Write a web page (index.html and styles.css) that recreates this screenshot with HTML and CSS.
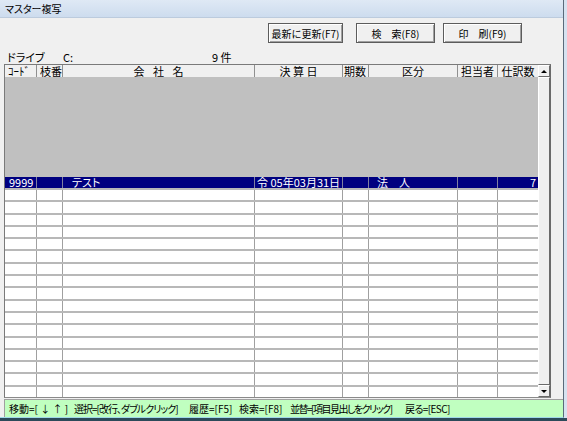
FILE: index.html
```html
<!DOCTYPE html>
<html lang="ja">
<head>
  <meta charset="UTF-8" />
  <title>マスター複写</title>
  <link rel="stylesheet" href="styles.css">
</head>
<body>
  <div id="frame">
    <div id="window">
      <div class="titlebar">マスター複写</div>
      <div class="toolbar">
        <button class="btn btn-refresh">最新に更新(F7)</button>
        <button class="btn">検　索(F8)</button>
        <button class="btn">印　刷(F9)</button>
      </div>
      <div class="drive">
        <span class="drive-label">ドライブ</span>
        <span class="drive-name">C:</span>
        <span class="drive-count">9 件</span>
      </div>
      <div class="grid">
        <div class="table">
          <div class="row head">
            <div class="cell c1">ｺｰﾄﾞ</div>
            <div class="cell c2">枝番</div>
            <div class="cell c3 center wide">会 社 名</div>
            <div class="cell c4 center">決 算 日</div>
            <div class="cell c5">期数</div>
            <div class="cell c6 center">区分</div>
            <div class="cell c7 center">担当者</div>
            <div class="cell c8 center">仕訳数</div>
          </div>
          <div class="blank"></div>
          <div id="rows" class="rows">
            <div class="row sel">
              <div class="cell c1 code">9999</div>
              <div class="cell c2"></div>
              <div class="cell c3 name">テスト</div>
              <div class="cell c4 date">令 05年03月31日</div>
              <div class="cell c5"></div>
              <div class="cell c6 kind">法　人</div>
              <div class="cell c7"></div>
              <div class="cell c8 num">7</div>
            </div>
          </div>
        </div>
        <div class="vscroll">
          <div class="arrow up"><span></span></div>
          <div class="thumb"></div>
          <div class="arrow down"><span></span></div>
        </div>
      </div>
      <div class="status">
        <span class="hint h-move">移動=[ ↓ ↑ ]</span>
        <span class="hint h-select">選択=[改行、ダブルクリック]</span>
        <span class="hint h-hist">履歴=[F5]</span>
        <span class="hint h-find">検索=[F8]</span>
        <span class="hint h-sort">並替=[項目見出しをクリック]</span>
        <span class="hint h-back">戻る=[ESC]</span>
      </div>
    </div>
  </div>
  <script>
    const rows = document.getElementById('rows');
    for (let i = 0; i < 17; i++) {
      const row = document.createElement('div');
      row.className = 'row';
      for (let c = 1; c <= 8; c++) {
        const cell = document.createElement('div');
        cell.className = 'cell c' + c;
        row.appendChild(cell);
      }
      rows.appendChild(row);
    }
  </script>
</body>
</html>
```

FILE: styles.css
```css
body {
  margin: 0;
  height: 421px;
  background: #2c4a5a;
  font-family: "Noto Sans CJK JP", "Noto Sans", sans-serif;
  font-feature-settings: "palt";
  color: #000;
  overflow: hidden;
}
#frame {
  width: 567px;
  height: 418px;
  background: #d6e2f0;
}
#window {
  width: 564px;
  height: 418px;
  box-sizing: border-box;
  background: #f0f0f0;
  border-right: 1px solid #5a6a7a;
  border-bottom: 1px solid #9fd8e8;
  display: flex;
  flex-direction: column;
}
.titlebar {
  height: 18px;
  line-height: 17px;
  padding-left: 5px;
  font-size: 10px;
  background: linear-gradient(#dfe9f5, #cddcee);
  border-bottom: 1px solid #bccbdd;
  box-sizing: border-box;
}
.toolbar {
  display: flex;
  gap: 8px;
  margin-top: 5px;
  padding-left: 268px;
  height: 20px;
}
.btn {
  width: 79px;
  height: 20px;
  padding: 0;
  font-family: inherit;
  font-size: 10px;
  background: #f0f0f0;
  border: 1px solid #5c5c5c;
  box-shadow: inset 1px 1px 0 #fff, inset -1px -1px 0 #a0a0a0;
  color: #000;
}
.btn-refresh {
  width: 75px;
  margin-right: 5px;
}
.drive {
  height: 21px;
  box-sizing: border-box;
  padding-top: 8px;
  line-height: 12px;
  font-size: 11px;
  display: flex;
}
.drive-label { margin-left: 7px; width: 56px; }
.drive-name { width: 149px; }
.grid {
  display: flex;
  margin-left: 4px;
  width: 547px;
  border-left: 1px solid #7a7a7a;
  border-right: 1px solid #6a6a6a;
  border-top: 1px solid #7a7a7a;
  border-bottom: 1px solid #8a8a8a;
  box-sizing: border-box;
}
.table {
  width: 533px;
  display: flex;
  flex-direction: column;
}
.row {
  display: grid;
  grid-template-columns: 32px 26px 192px 88px 26px 89px 40px 40px;
  font-size: 11px;
  line-height: 12px;
}
.cell {
  border-right: 1px solid #a0a0a0;
  box-sizing: border-box;
  white-space: nowrap;
}
.c8 { border-right: none; }
.head {
  height: 12px;
  background: #f0f0f0;
}
.head .cell {
  border-right-color: #909090;
  padding-left: 3px;
}
.head .c5 { padding-left: 1px; }
.head .center { padding-left: 0; text-align: center; }
.head .wide { word-spacing: 6px; }
.blank {
  height: 100px;
  background: #c0c0c0;
}
.rows {
  height: 220px;
  display: flex;
  flex-direction: column;
  background: #fff;
}
.rows .row {
  flex: 1;
  border-bottom: 2px solid #b8b8b8;
  box-sizing: border-box;
}
.rows .row:last-child { border-bottom: none; }
.rows .cell { line-height: 11px; }
.sel {
  background: #000080;
  color: #fff;
}
.sel .cell { border-right-color: #8080a0; }
.code { padding-left: 4px; }
.name { padding-left: 9px; }
.date { padding-left: 2px; }
.kind { padding-left: 8px; }
.num { text-align: right; padding-right: 2px; }
.vscroll {
  width: 12px;
  display: flex;
  flex-direction: column;
}
.arrow, .thumb {
  background: #f0f0f0;
  border: 1px solid;
  border-color: #fff #6a6a6a #6a6a6a #fff;
  box-sizing: border-box;
}
.arrow {
  height: 12px;
  display: flex;
  justify-content: center;
  align-items: center;
}
.thumb { flex: 1; }
.arrow span {
  width: 0;
  height: 0;
  border-left: 3px solid transparent;
  border-right: 3px solid transparent;
}
.up span { border-bottom: 3px solid #000; }
.down span { border-top: 3px solid #000; }
.status {
  margin-top: 1px;
  margin-left: 4px;
  height: 18px;
  box-sizing: border-box;
  background: #c0ffc0;
  border-top: 1px solid #a0a0a0;
  border-left: 1px solid #a0a0a0;
  display: flex;
  align-items: center;
  padding-left: 4px;
  font-size: 10px;
  white-space: nowrap;
}
.h-move { width: 65px; }
.h-select { width: 115px; letter-spacing: -1px; }
.h-hist { width: 50px; }
.h-find { width: 51px; }
.h-sort { width: 115px; letter-spacing: -1.5px; }
.h-back { letter-spacing: -0.6px; }
```
